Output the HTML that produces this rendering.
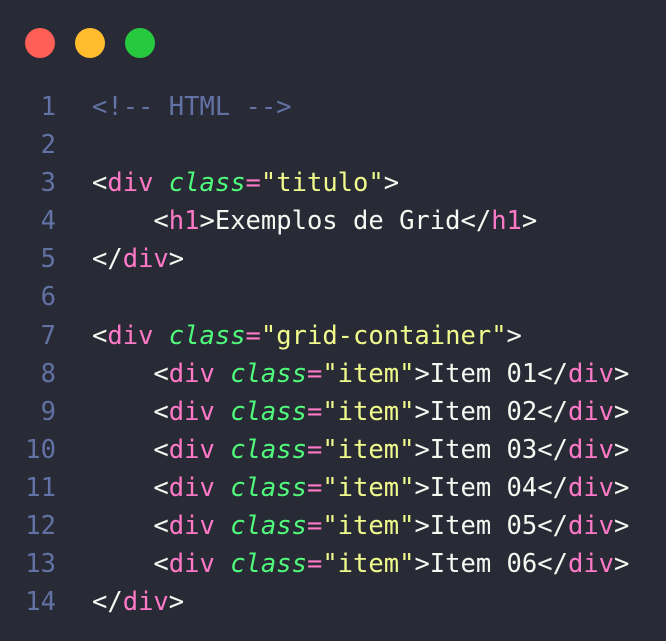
<!DOCTYPE html>
<html><head><style>
html,body{margin:0;padding:0;background:#282a36;width:666px;height:641px;overflow:hidden}
.dot{position:absolute;top:28px;width:30px;height:30px;border-radius:50%}
.code{position:absolute;left:0;top:88px;font-family:"DejaVu Sans Mono","Liberation Mono",monospace;font-size:25.5px;line-height:38.1px;color:#f8f8f2;white-space:pre}
.ln{display:inline-block;width:56px;text-align:right;color:#6272a4;margin-right:36px}
.c{color:#6272a4}.t{color:#ff79c6}.a{color:#50fa7b;font-style:italic}.s{color:#f1fa8c}.p{color:#ff79c6}
</style></head><body>
<div class="dot" style="left:25px;background:#ff5f56"></div>
<div class="dot" style="left:75px;background:#ffbd2e"></div>
<div class="dot" style="left:125px;background:#27c93f"></div>
<div class="code"><div><span class="ln">1</span><span class="c">&lt;!-- HTML --&gt;</span></div><div><span class="ln">2</span></div><div><span class="ln">3</span>&lt;<span class="t">div</span> <span class="a">class</span><span class="p">=</span><span class="s">"titulo"</span>&gt;</div><div><span class="ln">4</span>    &lt;<span class="t">h1</span>&gt;Exemplos de Grid&lt;/<span class="t">h1</span>&gt;</div><div><span class="ln">5</span>&lt;/<span class="t">div</span>&gt;</div><div><span class="ln">6</span></div><div><span class="ln">7</span>&lt;<span class="t">div</span> <span class="a">class</span><span class="p">=</span><span class="s">"grid-container"</span>&gt;</div><div><span class="ln">8</span>    &lt;<span class="t">div</span> <span class="a">class</span><span class="p">=</span><span class="s">"item"</span>&gt;Item 01&lt;/<span class="t">div</span>&gt;</div><div><span class="ln">9</span>    &lt;<span class="t">div</span> <span class="a">class</span><span class="p">=</span><span class="s">"item"</span>&gt;Item 02&lt;/<span class="t">div</span>&gt;</div><div><span class="ln">10</span>    &lt;<span class="t">div</span> <span class="a">class</span><span class="p">=</span><span class="s">"item"</span>&gt;Item 03&lt;/<span class="t">div</span>&gt;</div><div><span class="ln">11</span>    &lt;<span class="t">div</span> <span class="a">class</span><span class="p">=</span><span class="s">"item"</span>&gt;Item 04&lt;/<span class="t">div</span>&gt;</div><div><span class="ln">12</span>    &lt;<span class="t">div</span> <span class="a">class</span><span class="p">=</span><span class="s">"item"</span>&gt;Item 05&lt;/<span class="t">div</span>&gt;</div><div><span class="ln">13</span>    &lt;<span class="t">div</span> <span class="a">class</span><span class="p">=</span><span class="s">"item"</span>&gt;Item 06&lt;/<span class="t">div</span>&gt;</div><div><span class="ln">14</span>&lt;/<span class="t">div</span>&gt;</div></div>
</body></html>
